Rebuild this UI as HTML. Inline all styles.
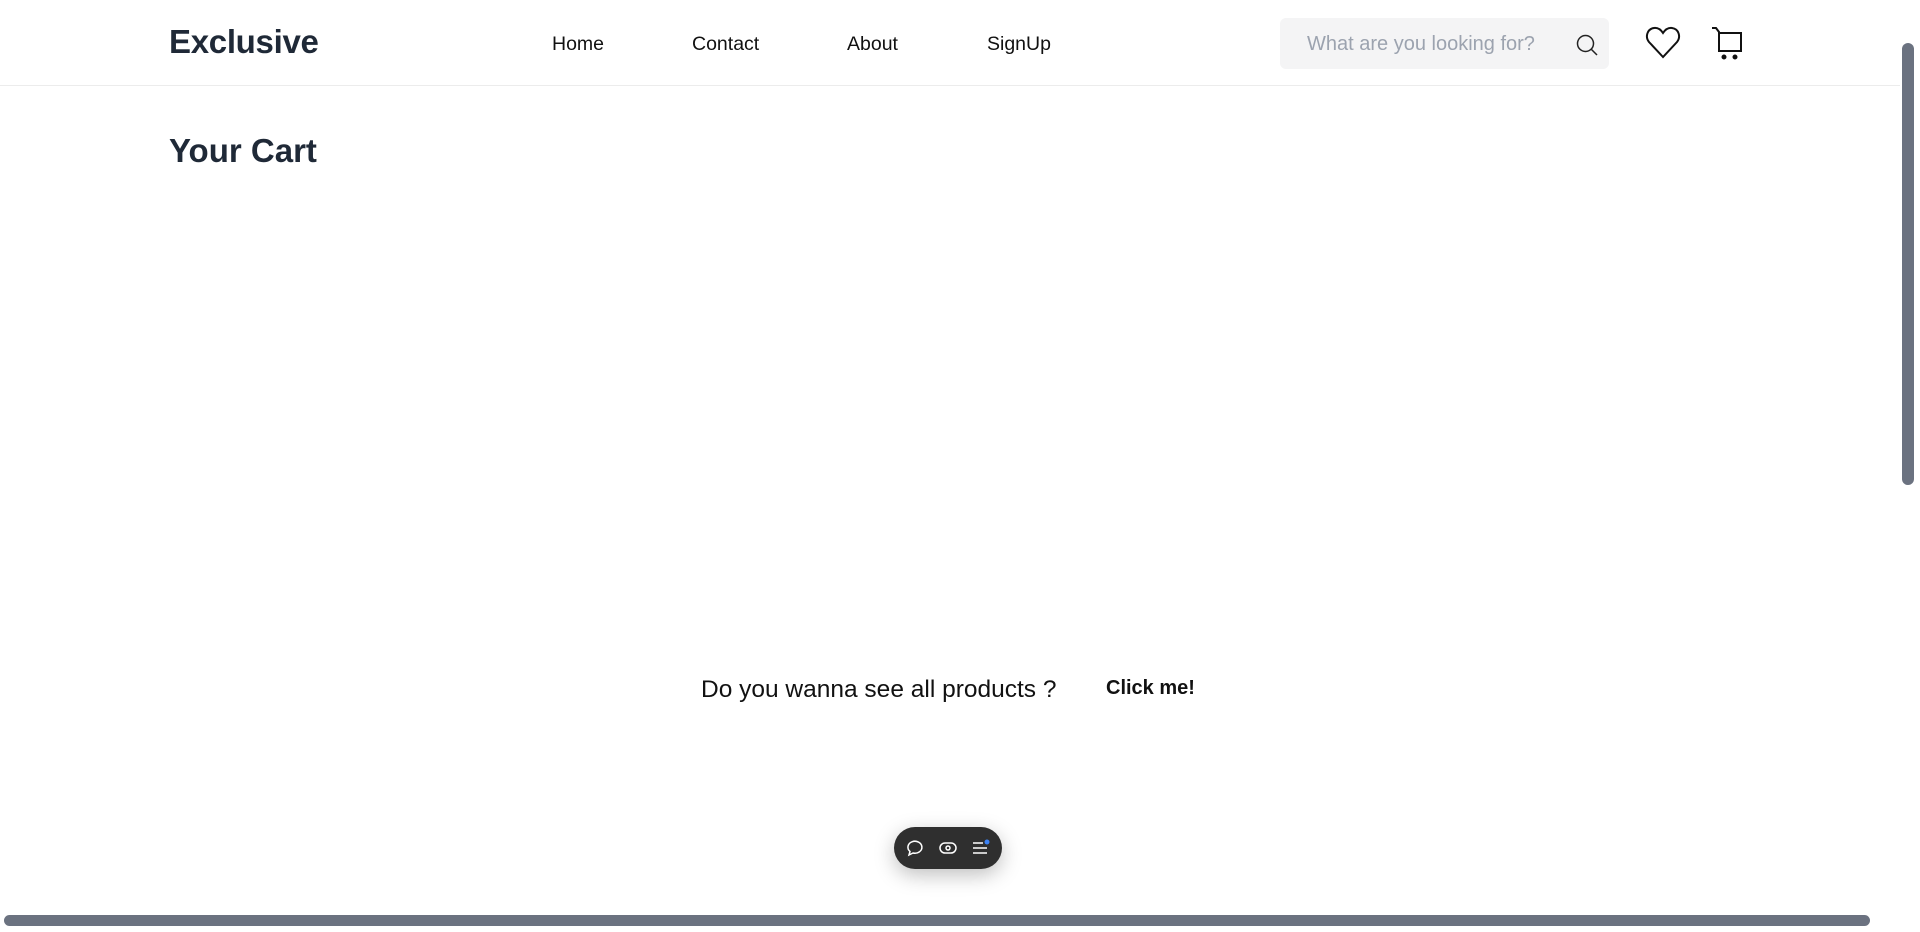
<!DOCTYPE html>
<html><head><meta charset="utf-8"><style>
*{margin:0;padding:0;box-sizing:border-box}
body{width:1920px;height:932px;overflow:hidden;background:#fff;font-family:"Liberation Sans",sans-serif;color:#1f2937;position:relative}
.hdr{position:absolute;left:0;top:0;width:1900px;height:86px;border-bottom:1px solid #ececec}
.logo{position:absolute;left:169px;top:23px;font-size:33px;font-weight:bold;letter-spacing:-0.3px}
.nav{position:absolute;top:33px;font-size:19.5px;color:#111}
.search{position:absolute;left:1280px;top:18px;width:329px;height:51px;background:#f4f4f5;border-radius:6px}
.search span{position:absolute;left:27px;top:15px;font-size:20px;color:#9ca3af}
.search svg{position:absolute;left:295px;top:15px}
h1{position:absolute;left:169px;top:132px;font-size:33px;font-weight:bold}
.q{position:absolute;left:701px;top:676px;font-size:24.5px;color:#111}
.c{position:absolute;left:1106px;top:677px;font-size:20px;font-weight:bold;color:#111}
.tb{position:absolute;left:894px;top:827px;width:108px;height:42px;background:#2f2f2f;border-radius:21px;box-shadow:0 6px 20px rgba(0,0,0,.25)}
.hs{position:absolute;left:4px;top:915px;width:1866px;height:11px;background:#6b7280;border-radius:6px}
.vs{position:absolute;left:1902px;top:43px;width:12px;height:442px;background:#6b7280;border-radius:6px}
</style></head><body>
<div class="hdr">
<div class="logo">Exclusive</div>
<div class="nav" style="left:552px">Home</div>
<div class="nav" style="left:692px">Contact</div>
<div class="nav" style="left:847px">About</div>
<div class="nav" style="left:987px">SignUp</div>
<div class="search"><span>What are you looking for?</span>
<svg width="24" height="24" viewBox="0 0 24 24" fill="none" stroke="#222" stroke-width="1.5"><circle cx="10.5" cy="10.5" r="8"/><path d="M16.5 16.5L22 22"/></svg></div>
<svg style="position:absolute;left:1645px;top:26px" width="36" height="34" viewBox="0 0 36 34" fill="none" stroke="#111" stroke-width="2"><path d="M18 31L4 16C0 11 2 3 9 2c4-.5 7 2 9 5 2-3 5-5.5 9-5 7 1 9 9 5 14z"/></svg>
<svg style="position:absolute;left:1710px;top:26px" width="38" height="34" viewBox="0 0 38 34" fill="none" stroke="#111" stroke-width="2"><path d="M2 2h4l3 4v19h22V7H9"/><circle cx="14" cy="31" r="1.5" fill="#111"/><circle cx="25" cy="31" r="1.5" fill="#111"/></svg>
</div>
<h1>Your Cart</h1>
<div class="q">Do you wanna see all products ?</div>
<div class="c">Click me!</div>
<div class="tb">
<svg style="position:absolute;left:11px;top:11px" width="20" height="20" viewBox="0 0 20 20" fill="none" stroke="#fff" stroke-width="1.5"><path d="M4 17l1-3.5A7 6 0 1 1 8 15z"/></svg>
<svg style="position:absolute;left:44px;top:11px" width="20" height="20" viewBox="0 0 20 20" fill="none" stroke="#fff" stroke-width="1.5"><rect x="2" y="5" width="16" height="10" rx="5"/><circle cx="10" cy="10" r="2"/></svg>
<svg style="position:absolute;left:76px;top:10px" width="22" height="22" viewBox="0 0 22 22" fill="none" stroke="#fff" stroke-width="1.5"><path d="M3 6h10M3 11h14M3 16h14"/><circle cx="17" cy="5" r="2.5" fill="#3b82f6" stroke="none"/></svg>
</div>
<div class="hs"></div>
<div class="vs"></div>
</body></html>
